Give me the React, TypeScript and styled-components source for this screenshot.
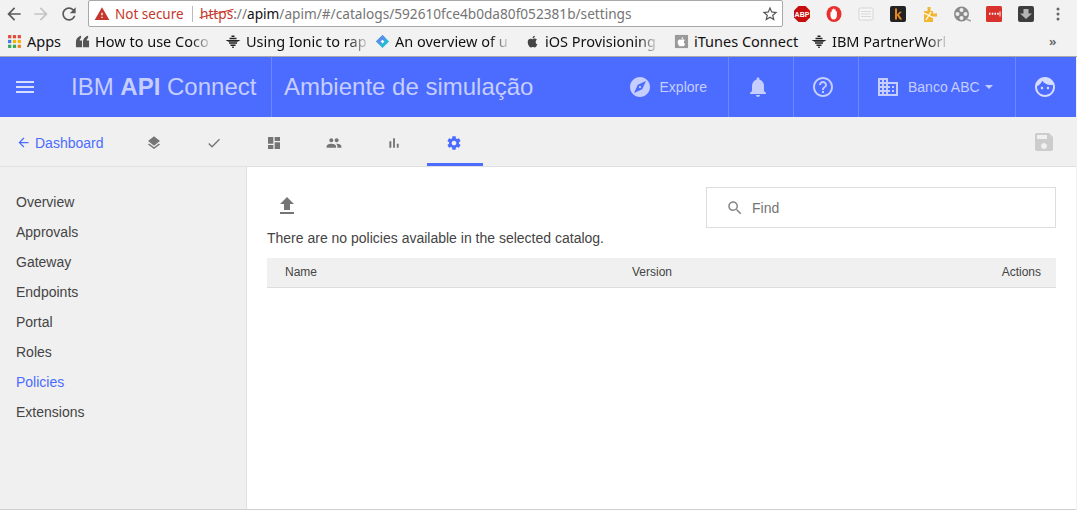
import React from "react";
import styled, { createGlobalStyle } from "styled-components";

const paths: Record<string, string> = {
  back: "M20 11H7.83l5.59-5.59L12 4l-8 8 8 8 1.41-1.41L7.83 13H20v-2z",
  forward: "M12 4l-1.41 1.41L16.17 11H4v2h12.17l-5.58 5.59L12 20l8-8z",
  refresh:
    "M17.65 6.35C16.2 4.9 14.21 4 12 4c-4.42 0-7.99 3.58-7.99 8s3.57 8 7.99 8c3.73 0 6.84-2.55 7.73-6h-2.08c-.82 2.33-3.04 4-5.65 4-3.31 0-6-2.69-6-6s2.69-6 6-6c1.66 0 3.14.69 4.22 1.78L13 11h7V4l-2.35 2.35z",
  warning: "M1 21h22L12 2 1 21zm12-3h-2v-2h2v2zm0-4h-2v-4h2v4z",
  star: "M22 9.24l-7.19-.62L12 2 9.19 8.63 2 9.24l5.46 4.73L5.82 21 12 17.27 18.18 21l-1.63-7.03L22 9.24zM12 15.4l-3.76 2.27 1-4.28-3.32-2.88 4.38-.38L12 6.1l1.71 4.04 4.38.38-3.32 2.88 1 4.28L12 15.4z",
  menu: "M3 18h18v-2H3v2zm0-5h18v-2H3v2zm0-7v2h18V6H3z",
  explore:
    "M12 10.9c-.61 0-1.1.49-1.1 1.1s.49 1.1 1.1 1.1c.61 0 1.1-.49 1.1-1.1s-.49-1.1-1.1-1.1zM12 2C6.48 2 2 6.48 2 12s4.48 10 10 10 10-4.48 10-10S17.52 2 12 2zm2.19 12.19L6 18l3.81-8.19L18 6l-3.81 8.19z",
  bell: "M12 22c1.1 0 2-.9 2-2h-4c0 1.1.89 2 2 2zm6-6v-5c0-3.07-1.64-5.64-4.5-6.32V4c0-.83-.67-1.5-1.5-1.5s-1.5.67-1.5 1.5v.68C7.63 5.36 6 7.92 6 11v5l-2 2v1h16v-1l-2-2z",
  help: "M11 18h2v-2h-2v2zm1-16C6.48 2 2 6.48 2 12s4.48 10 10 10 10-4.48 10-10S17.52 2 12 2zm0 18c-4.41 0-8-3.59-8-8s3.59-8 8-8 8 3.59 8 8-3.59 8-8 8zm0-14c-2.21 0-4 1.79-4 4h2c0-1.1.9-2 2-2s2 .9 2 2c0 2-3 1.75-3 5h2c0-2.25 3-2.5 3-5 0-2.21-1.79-4-4-4z",
  domain:
    "M12 7V3H2v18h20V7H12zM6 19H4v-2h2v2zm0-4H4v-2h2v2zm0-4H4V9h2v2zm0-4H4V5h2v2zm4 12H8v-2h2v2zm0-4H8v-2h2v2zm0-4H8V9h2v2zm0-4H8V5h2v2zm10 12h-8v-2h2v-2h-2v-2h2v-2h-2V9h8v10zm-2-8h-2v2h2v-2zm0 4h-2v2h2v-2z",
  face: "M9 11.75c-.69 0-1.25.56-1.25 1.25s.56 1.25 1.25 1.25 1.25-.56 1.25-1.25-.56-1.25-1.25-1.25zm6 0c-.69 0-1.25.56-1.25 1.25s.56 1.25 1.25 1.25 1.25-.56 1.25-1.25-.56-1.25-1.25-1.25zM12 2C6.48 2 2 6.48 2 12s4.48 10 10 10 10-4.48 10-10S17.52 2 12 2zm0 18c-4.41 0-8-3.59-8-8 0-.29.02-.58.05-.86 2.36-1.05 4.23-2.98 5.21-5.37C11.07 8.33 14.05 10 17.42 10c.78 0 1.53-.09 2.25-.26.21.71.33 1.47.33 2.26 0 4.41-3.59 8-8 8z",
  layers:
    "M11.99 18.54l-7.37-5.73L3 14.07l9 7 9-7-1.63-1.27-7.38 5.74zM12 16l7.36-5.73L21 9l-9-7-9 7 1.63 1.27L12 16z",
  check: "M9 16.17L4.83 12l-1.42 1.41L9 19 21 7l-1.41-1.41z",
  dashboard: "M3 13h8V3H3v10zm0 8h8v-6H3v6zm10 0h8V11h-8v10zm0-18v6h8V3h-8z",
  people:
    "M16 11c1.66 0 2.99-1.34 2.99-3S17.66 5 16 5c-1.66 0-3 1.34-3 3s1.34 3 3 3zm-8 0c1.66 0 2.99-1.34 2.99-3S9.66 5 8 5C6.34 5 5 6.34 5 8s1.34 3 3 3zm0 2c-2.33 0-7 1.17-7 3.5V19h14v-2.5c0-2.33-4.67-3.5-7-3.5zm8 0c-.29 0-.62.02-.97.05 1.16.84 1.97 1.97 1.97 3.45V19h6v-2.5c0-2.33-4.67-3.5-7-3.5z",
  chart: "M5 9.2h3V19H5zM10.6 5h2.8v14h-2.8zm5.6 8H19v6h-2.8z",
  settings:
    "M19.43 12.98c.04-.32.07-.64.07-.98s-.03-.66-.07-.98l2.11-1.65c.19-.15.24-.42.12-.64l-2-3.46c-.12-.22-.39-.3-.61-.22l-2.49 1c-.52-.4-1.08-.73-1.69-.98l-.38-2.65C14.46 2.18 14.25 2 14 2h-4c-.25 0-.46.18-.49.42l-.38 2.65c-.61.25-1.17.59-1.69.98l-2.49-1c-.23-.09-.49 0-.61.22l-2 3.46c-.13.22-.07.49.12.64l2.11 1.65c-.04.32-.07.65-.07.98s.03.66.07.98l-2.11 1.65c-.19.15-.24.42-.12.64l2 3.46c.12.22.39.3.61.22l2.49-1c.52.4 1.08.73 1.69.98l.38 2.65c.03.24.24.42.49.42h4c.25 0 .46-.18.49-.42l.38-2.65c.61-.25 1.17-.59 1.69-.98l2.49 1c.23.09.49 0 .61-.22l2-3.46c.12-.22.07-.49-.12-.64l-2.11-1.65zM12 15.5c-1.93 0-3.5-1.57-3.5-3.5s1.57-3.5 3.5-3.5 3.5 1.57 3.5 3.5-1.57 3.5-3.5 3.5z",
  save: "M17 3H5c-1.11 0-2 .9-2 2v14c0 1.1.89 2 2 2h14c1.1 0 2-.9 2-2V7l-4-4zm-5 16c-1.66 0-3-1.34-3-3s1.34-3 3-3 3 1.34 3 3-1.34 3-3 3zm3-10H5V5h10v4z",
  upload: "M9 16h6v-6h4l-7-7-7 7h4zm-4 2h14v2H5z",
  search:
    "M15.5 14h-.79l-.28-.27C15.41 12.59 16 11.11 16 9.5 16 5.91 13.09 3 9.5 3S3 5.91 3 9.5 5.91 16 9.5 16c1.61 0 3.09-.59 4.23-1.57l.27.28v.79l5 4.99L20.49 19l-4.99-5zm-6 0C7.01 14 5 11.99 5 9.5S7.01 5 9.5 5 14 7.01 14 9.5 11.99 14 9.5 14z",
  apple:
    "M17.05 12.6c0-2.3 1.9-3.4 2-3.5-1.1-1.6-2.8-1.8-3.4-1.8-1.4-.2-2.8.9-3.5.9-.7 0-1.9-.8-3.1-.8-1.6 0-3.1.9-3.9 2.3-1.7 2.9-.4 7.2 1.2 9.5.8 1.2 1.8 2.4 3 2.4 1.2-.1 1.7-.8 3.1-.8 1.4 0 1.9.8 3.1.7 1.3 0 2.1-1.1 2.9-2.3.9-1.3 1.3-2.6 1.3-2.7-.1 0-2.7-1-2.7-3.9zM14.8 5.6c.6-.8 1.1-1.9 1-3-.9 0-2.1.6-2.8 1.4-.6.7-1.1 1.8-1 2.9 1.1.1 2.1-.5 2.8-1.3z",
};

const GlobalStyle = createGlobalStyle`
  html, body {
    margin: 0;
    padding: 0;
    background: #f0f0f0;
  }
  * {
    box-sizing: border-box;
  }
`;

const Svg = styled.svg<{ $size: number; $color: string }>`
  display: block;
  flex: none;
  width: ${(p) => p.$size}px;
  height: ${(p) => p.$size}px;
  fill: ${(p) => p.$color};
`;

const Icon = ({ name, size, color }: { name: string; size: number; color: string }) => (
  <Svg viewBox="0 0 24 24" $size={size} $color={color}>
    <path d={paths[name]} />
  </Svg>
);

const Page = styled.div`
  width: 1077px;
  height: 510px;
  overflow: hidden;
  display: flex;
  flex-direction: column;
  font-family: "Liberation Sans", Arial, sans-serif;
`;

const Browser = styled.div`
  height: 57px;
  background: #f2f2f2;
  border-bottom: 1px solid #a9a9a9;
  font-family: "Noto Sans", "Open Sans", sans-serif;
`;

const Toolbar = styled.div`
  height: 28px;
  display: flex;
  align-items: center;
`;

const NavButton = styled.div`
  width: 27.5px;
  display: flex;
  justify-content: center;
`;

const NavButtons = styled.div`
  display: flex;
  width: 88px;
  padding-right: 2px;
`;

const AddressBar = styled.div`
  width: 695px;
  height: 27px;
  margin-top: -1px;
  background: #fff;
  border: 1px solid #a8a8a8;
  border-radius: 2px;
  display: flex;
  align-items: center;
  padding-left: 5px;
  font-size: 13.5px;
  white-space: nowrap;
`;

const NotSecure = styled.span`
  color: #c5372c;
  margin-left: 5px;
  width: 78px;
  border-right: 1px solid #bbb;
  line-height: 16px;
`;

const Url = styled.span`
  margin-left: 7px;
  color: #757575;
  font-size: 13.65px;
  flex: 1;
`;

const Host = styled.span`
  color: #111;
`;

const Scheme = styled.span`
  position: relative;
  color: #c5372c;

  &::after {
    content: "";
    position: absolute;
    left: -1px;
    right: -1px;
    top: 9px;
    height: 1px;
    background: #c5372c;
    transform: rotate(-14deg);
  }
`;

const Star = styled.div`
  margin-right: 3px;
`;

const Extensions = styled.div`
  display: flex;
  margin-left: 3px;
`;

const Ext = styled.div`
  width: 32px;
  height: 28px;
  display: flex;
  align-items: center;
  justify-content: center;
`;

const ExtSvg = styled.svg`
  width: 18px;
  height: 18px;
  display: block;
`;

const ExtText = styled.text`
  font-family: "Liberation Sans", sans-serif;
  font-weight: 700;
`;

const Bookmarks = styled.div`
  height: 28px;
  display: flex;
  align-items: center;
  padding: 0 0 2px 7px;
  font-size: 14.5px;
  color: #111;
  white-space: nowrap;
`;

const Bookmark = styled.div<{ $width: number }>`
  width: ${(p) => p.$width}px;
  flex: none;
  display: flex;
  align-items: center;
  gap: 5px;
`;

const BookmarkLabel = styled.span<{ $fade?: boolean }>`
  display: block;
  ${(p) =>
    p.$fade
      ? "-webkit-mask-image: linear-gradient(to right, #000 84%, rgba(0,0,0,.15) 100%); mask-image: linear-gradient(to right, #000 84%, rgba(0,0,0,.15) 100%);"
      : ""}
`;

const More = styled.span`
  margin-left: 95px;
  color: #666;
  font-size: 13px;
  font-weight: 600;
`;

const App1 = styled.div`
  flex: 1;
  width: 1076px;
  min-height: 0;
  display: flex;
  flex-direction: column;
  background: #fff;
  border-bottom: 1px solid #cfcfcf;
`;

const Header = styled.header`
  height: 60px;
  flex: none;
  display: flex;
  background: #4c6bff;
  color: #c5ceff;
`;

const HeaderCell = styled.div<{ $width?: number; $shift?: number }>`
  height: 100%;
  display: flex;
  align-items: center;
  ${(p) => (p.$width ? `width: ${p.$width}px; justify-content: center;` : "")}
  ${(p) => (p.$shift ? `padding-right: ${p.$shift}px;` : "")}
  border-left: 1px solid #6d87ff;
`;

const Brand = styled.div`
  width: 271px;
  height: 100%;
  display: flex;
  align-items: center;
  padding-left: 13px;
`;

const BrandName = styled.div`
  margin-left: 34px;
  font-size: 24px;
  white-space: nowrap;

  b {
    font-weight: 700;
  }
`;

const Environment = styled(HeaderCell)`
  padding-left: 12px;
  font-size: 24px;
  white-space: nowrap;
  flex: 1;
`;

const ExploreCell = styled.div`
  height: 100%;
  display: flex;
  align-items: center;
  gap: 8px;
  padding-right: 21px;
  font-size: 14px;
`;

const OrgCell = styled(HeaderCell)`
  justify-content: flex-start;
  padding-left: 17px;
  font-size: 14px;
  gap: 8px;
`;

const Caret = styled.span`
  width: 0;
  height: 0;
  margin-left: -3px;
  border-left: 4.5px solid transparent;
  border-right: 4.5px solid transparent;
  border-top: 4.5px solid #c5ceff;
`;

const SubNav = styled.nav`
  height: 50px;
  flex: none;
  display: flex;
  align-items: center;
  background: #f0f0f0;
  border-bottom: 1px solid #e0e0e0;
  padding-right: 20px;
`;

const BackLink = styled.a`
  width: 127px;
  display: flex;
  align-items: center;
  gap: 4px;
  padding: 2px 0 0 16px;
  color: #4c6bff;
  font-size: 14px;
`;

const Tabs = styled.div`
  display: flex;
  gap: 4px;
  flex: 1;
  height: 100%;
`;

const Tab = styled.div<{ $active?: boolean }>`
  width: 56px;
  height: 100%;
  display: flex;
  align-items: center;
  justify-content: center;
  border-bottom: 3px solid ${(p) => (p.$active ? "#4c6bff" : "transparent")};
  padding: 6px 2px 0 0;
`;

const Body = styled.div`
  flex: 1;
  min-height: 0;
  display: flex;
`;

const Sidebar = styled.aside`
  width: 247px;
  flex: none;
  background: #f0f0f0;
  border-right: 1px solid #e0e0e0;
  padding-top: 20px;
`;

const SideItem = styled.div<{ $active?: boolean }>`
  height: 30px;
  line-height: 30px;
  padding-left: 16px;
  font-size: 14px;
  color: ${(p) => (p.$active ? "#4c6bff" : "#444")};
`;

const Content = styled.main`
  flex: 1;
  padding: 20px 20px 0;
`;

const ContentTop = styled.div`
  height: 41px;
  display: flex;
  justify-content: space-between;
`;

const UploadButton = styled.div`
  padding: 7px 0 0 8px;
`;

const FindBox = styled.div`
  width: 350px;
  height: 41px;
  display: flex;
  align-items: center;
  gap: 8px;
  padding-left: 19px;
  border: 1px solid #ddd;
  font-size: 14px;
  color: #757575;
`;

const Message = styled.p`
  margin: 0 0 10px;
  height: 20px;
  line-height: 20px;
  font-size: 14px;
  color: #444;
`;

const TableHead = styled.div`
  height: 30px;
  display: grid;
  grid-template-columns: 347px 1fr auto;
  align-items: center;
  padding: 0 15px 2px 18px;
  background: #f0f0f0;
  border-bottom: 1px solid #ddd;
  font-size: 12px;
  color: #444;
`;

const sideItems = ["Overview", "Approvals", "Gateway", "Endpoints", "Portal", "Roles", "Policies", "Extensions"];
const tabs = ["layers", "check", "dashboard", "people", "chart", "settings"];

const Bee = () => (
  <Svg viewBox="0 0 16 16" $size={16} $color="#222">
    <path d="M6.500 2.500h3v1.500h-3zM4.500 4.800h7v1.500h-7zM.5 7h15l-3 1.700h-9zM4 9.300h8v1.500H4zM5.500 11.500h5V13h-5zM7.200 13.600h1.600V15H7.200z" />
  </Svg>
);

const App = () => {
  return (
    <Page>
      <GlobalStyle />
      <Browser>
        <Toolbar>
          <NavButtons>
            <NavButton>
              <Icon name="back" size={20} color="#5a5a5a" />
            </NavButton>
            <NavButton>
              <Icon name="forward" size={20} color="#c4c4c4" />
            </NavButton>
            <NavButton>
              <Icon name="refresh" size={20} color="#5a5a5a" />
            </NavButton>
          </NavButtons>
          <AddressBar>
            <Icon name="warning" size={16} color="#c5372c" />
            <NotSecure>Not secure</NotSecure>
            <Url>
              <Scheme>https</Scheme>://<Host>apim</Host>/apim/#/catalogs/592610fce4b0da80f052381b/settings
            </Url>
            <Star>
              <Icon name="star" size={18} color="#555" />
            </Star>
          </AddressBar>
          <Extensions>
            <Ext>
              <ExtSvg viewBox="0 0 18 18">
                <polygon points="5.500,1 12.500,1 17,5.500 17,12.500 12.500,17 5.500,17 1,12.500 1,5.500" fill="#c70d0d" />
                <ExtText x="9" y="11.500" fontSize="7" fill="#fff" textAnchor="middle">ABP</ExtText>
              </ExtSvg>
            </Ext>
            <Ext>
              <ExtSvg viewBox="0 0 18 18">
                <ellipse cx="9" cy="9" rx="7.500" ry="8" fill="#e8312f" />
                <path d="M5.500 7.500c0-1 1.200-1 1.200 0V5c0-1 1.300-1 1.300 0V4.300c0-1 1.400-1 1.400 0V5c0-1 1.300-1 1.300 0v2c0-1 1.200-1 1.200 0v3.500c0 2-1.100 4-3.200 4s-3.200-2-3.200-4z" fill="#fff" />
              </ExtSvg>
            </Ext>
            <Ext>
              <ExtSvg viewBox="0 0 18 18">
                <rect x="2" y="3" width="14" height="12" rx="1" fill="#f6f6f6" stroke="#d6d6d6" />
                <path d="M4 6.500h10M4 9h10M4 11.500h10" stroke="#d8d8d8" />
              </ExtSvg>
            </Ext>
            <Ext>
              <ExtSvg viewBox="0 0 18 18">
                <rect x="1" y="1" width="16" height="16" rx="2" fill="#222" />
                <path d="M6 3.500h2v6l2.600-2.800h2.300L10 9.800l3.200 4.700h-2.400L8 10.500v4H6z" fill="#e8871e" />
              </ExtSvg>
            </Ext>
            <Ext>
              <ExtSvg viewBox="0 0 18 18">
                <path d="M3 6h3.500V2h3v4H12v2.500h4v3h-4V17H3z" fill="#f2b632" />
                <path d="M3 8l10 5M5 15l5-8" stroke="#fff" strokeWidth="1.200" />
              </ExtSvg>
            </Ext>
            <Ext>
              <ExtSvg viewBox="0 0 18 18">
                <circle cx="8.500" cy="9" r="7.500" fill="#8a8a8a" />
                <circle cx="8.500" cy="5" r="2" fill="#efefef" />
                <circle cx="8.500" cy="13" r="2" fill="#efefef" />
                <circle cx="4.500" cy="9" r="2" fill="#efefef" />
                <circle cx="12.500" cy="9" r="2" fill="#efefef" />
                <path d="M13 14l5 2" stroke="#a0a0a0" strokeWidth="1.500" />
              </ExtSvg>
            </Ext>
            <Ext>
              <ExtSvg viewBox="0 0 18 18">
                <rect x="1" y="1" width="16" height="16" rx="1.500" fill="#d9312b" />
                <path d="M4 7.800h1.500v2H4zM6.800 7.800h1.500v2H6.800zM9.500 7.800H11v2H9.500zM12.200 7.800h1.500v2h-1.500z" fill="#fff" />
                <rect x="14.500" y="6.500" width="1" height="5" fill="#fff" />
              </ExtSvg>
            </Ext>
            <Ext>
              <ExtSvg viewBox="0 0 18 18">
                <rect x="1" y="1" width="16" height="16" rx="2" fill="#3d3d3d" />
                <path d="M6.500 4h5v4.500H15L9 14 3 8.500h3.500z" fill="#b5b5b5" />
              </ExtSvg>
            </Ext>
            <Ext>
              <ExtSvg viewBox="0 0 18 18">
                <circle cx="9" cy="4" r="1.500" fill="#666" />
                <circle cx="9" cy="9" r="1.500" fill="#666" />
                <circle cx="9" cy="14" r="1.500" fill="#666" />
              </ExtSvg>
            </Ext>
          </Extensions>
        </Toolbar>
        <Bookmarks>
          <Bookmark $width={68}>
            <Svg viewBox="0 0 14 14" $size={15} $color="#888">
              <path d="M1 1h3v3H1z" fill="#e04a3a" />
              <path d="M5.500 1h3v3h-3z" fill="#e04a3a" />
              <path d="M10 1h3v3h-3z" fill="#e04a3a" />
              <path d="M1 5.500h3v3H1z" fill="#3b78e7" />
              <path d="M5.500 5.500h3v3h-3z" fill="#f4b400" />
              <path d="M10 5.500h3v3h-3z" fill="#f4b400" />
              <path d="M1 10h3v3H1z" fill="#34a853" />
              <path d="M5.500 10h3v3h-3z" fill="#34a853" />
              <path d="M10 10h3v3h-3z" fill="#e8871e" />
            </Svg>
            <BookmarkLabel>Apps</BookmarkLabel>
          </Bookmark>
          <Bookmark $width={150}>
            <Svg viewBox="0 0 16 16" $size={15} $color="#555">
              <path d="M1 14V8.500C1 5.500 2.500 3 6.500 1.500v2.700C5.400 4.800 5 5.900 5 7h2.500v7zM8.500 14V8.500c0-3 1.500-5.500 5.500-7v2.700c-1.100.6-1.500 1.700-1.500 2.800H15v7z" />
            </Svg>
            <BookmarkLabel $fade>How to use Coco</BookmarkLabel>
          </Bookmark>
          <Bookmark $width={150}>
            <Bee />
            <BookmarkLabel $fade>Using Ionic to rap</BookmarkLabel>
          </Bookmark>
          <Bookmark $width={150}>
            <Svg viewBox="0 0 16 16" $size={15} $color="#29b6d8">
              <path d="M8 1l7 7-7 7-7-7z" />
              <path d="M8 1l3.500 3.500L5 11 1 8z" fill="#5b8def" />
              <path d="M8 6l2 2-2 2-2-2z" fill="#fff" />
            </Svg>
            <BookmarkLabel $fade>An overview of u</BookmarkLabel>
          </Bookmark>
          <Bookmark $width={149}>
            <Icon name="apple" size={15} color="#444" />
            <BookmarkLabel $fade>iOS Provisioning</BookmarkLabel>
          </Bookmark>
          <Bookmark $width={137}>
            <Svg viewBox="0 0 16 16" $size={15} $color="#9a9a9a">
              <path d="M1 1h14v14H1z" />
              <path d="M10.500 8.400c0-1.200 1-1.800 1-1.800-.6-.8-1.400-.9-1.800-.9-.7-.1-1.400.5-1.800.5s-1-.4-1.600-.4c-.8 0-1.600.5-2 1.200-.9 1.500-.2 3.700.6 4.900.4.600.9 1.200 1.600 1.200.6 0 .9-.4 1.600-.4s1 .4 1.600.4c.7 0 1.100-.6 1.500-1.200.4-.5.7-1.300.7-1.400-.1 0-1.400-.5-1.400-2zM9.300 4.800c.3-.4.5-1 .5-1.500-.5 0-1 .3-1.400.7-.3.400-.6.900-.5 1.500.5 0 1.100-.3 1.400-.7z" fill="#fff" />
            </Svg>
            <BookmarkLabel>iTunes Connect</BookmarkLabel>
          </Bookmark>
          <Bookmark $width={143}>
            <Bee />
            <BookmarkLabel $fade>IBM PartnerWorl</BookmarkLabel>
          </Bookmark>
          <More>»</More>
        </Bookmarks>
      </Browser>
      <App1>
        <Header>
          <Brand>
            <Icon name="menu" size={24} color="#d7ddff" />
            <BrandName>
              IBM <b>API</b> Connect
            </BrandName>
          </Brand>
          <Environment>Ambiente de simulação</Environment>
          <ExploreCell>
            <Icon name="explore" size={24} color="#c5ceff" />
            Explore
          </ExploreCell>
          <HeaderCell $width={65} $shift={6}>
            <Icon name="bell" size={24} color="#c5ceff" />
          </HeaderCell>
          <HeaderCell $width={65} $shift={6}>
            <Icon name="help" size={24} color="#c5ceff" />
          </HeaderCell>
          <OrgCell $width={157}>
            <Icon name="domain" size={24} color="#c5ceff" />
            Banco ABC
            <Caret />
          </OrgCell>
          <HeaderCell $width={61} $shift={2}>
            <Icon name="face" size={24} color="#d7ddff" />
          </HeaderCell>
        </Header>
        <SubNav>
          <BackLink>
            <Icon name="back" size={15} color="#4c6bff" />
            Dashboard
          </BackLink>
          <Tabs>
            {tabs.map((t) => (
              <Tab key={t} $active={t === "settings"}>
                <Icon name={t} size={16} color={t === "settings" ? "#4c6bff" : "#757575"} />
              </Tab>
            ))}
          </Tabs>
          <Icon name="save" size={24} color="#cccccc" />
        </SubNav>
        <Body>
          <Sidebar>
            {sideItems.map((s) => (
              <SideItem key={s} $active={s === "Policies"}>
                {s}
              </SideItem>
            ))}
          </Sidebar>
          <Content>
            <ContentTop>
              <UploadButton>
                <Icon name="upload" size={24} color="#757575" />
              </UploadButton>
              <FindBox>
                <Icon name="search" size={18} color="#888" />
                Find
              </FindBox>
            </ContentTop>
            <Message>There are no policies available in the selected catalog.</Message>
            <TableHead>
              <span>Name</span>
              <span>Version</span>
              <span>Actions</span>
            </TableHead>
          </Content>
        </Body>
      </App1>
    </Page>
  );
};

export default App;
